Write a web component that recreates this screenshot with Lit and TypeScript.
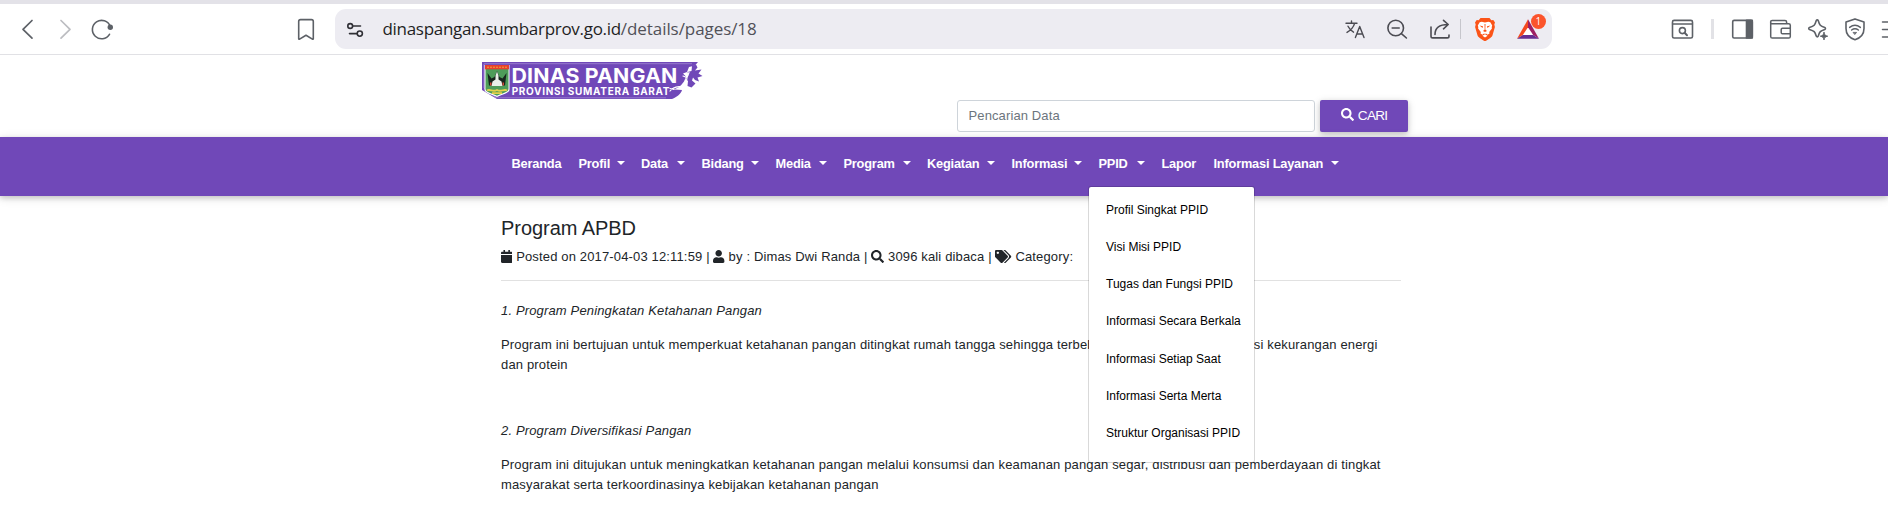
import { LitElement, html, css, svg } from "lit";
import { customElement } from "lit/decorators.js";

const FA: Record<string, [number, string]> = {
  search: [512, "M505 442.7L405.3 343c-4.5-4.5-10.6-7-17-7H372c27.6-35.3 44-79.7 44-128C416 93.1 322.9 0 208 0S0 93.1 0 208s93.1 208 208 208c48.3 0 92.7-16.4 128-44v16.3c0 6.4 2.5 12.5 7 17l99.7 99.7c9.4 9.4 24.6 9.4 33.9 0l28.3-28.3c9.4-9.4 9.4-24.6.1-34zM208 336c-70.7 0-128-57.2-128-128 0-70.7 57.2-128 128-128 70.7 0 128 57.2 128 128 0 70.7-57.2 128-128 128z"],
  user: [448, "M224 256c70.7 0 128-57.3 128-128S294.7 0 224 0 96 57.3 96 128s57.3 128 128 128zm89.6 32h-16.7c-22.2 10.2-46.9 16-72.9 16s-50.6-5.8-72.9-16h-16.7C60.2 288 0 348.2 0 422.4V464c0 26.5 21.5 48 48 48h352c26.5 0 48-21.5 48-48v-41.6c0-74.2-60.2-134.4-134.4-134.4z"],
  calendar: [448, "M12 192h424c6.6 0 12 5.4 12 12v260c0 26.5-21.5 48-48 48H48c-26.5 0-48-21.5-48-48V204c0-6.6 5.4-12 12-12zm436-44v-36c0-26.5-21.5-48-48-48h-48V12c0-6.6-5.4-12-12-12h-40c-6.6 0-12 5.4-12 12v52H160V12c0-6.6-5.4-12-12-12h-40c-6.6 0-12 5.4-12 12v52H48C21.5 64 0 85.5 0 112v36c0 6.6 5.4 12 12 12h424c6.6 0 12-5.4 12-12z"],
  tags: [640, "M497.941 225.941L286.059 14.059A48 48 0 0 0 252.118 0H48C21.49 0 0 21.49 0 48v204.118a48 48 0 0 0 14.059 33.941l211.882 211.882c18.744 18.745 49.136 18.746 67.882 0l204.118-204.118c18.745-18.745 18.745-49.137 0-67.882zM112 160c-26.51 0-48-21.49-48-48s21.49-48 48-48 48 21.49 48 48-21.49 48-48 48zm513.941 133.823L421.823 497.941c-18.745 18.745-49.137 18.745-67.882 0l-.36-.36L527.64 323.522c16.999-16.999 26.36-39.6 26.36-63.64s-9.362-46.641-26.36-63.64L331.397 0h48.721a48 48 0 0 1 33.941 14.059l211.882 211.882c18.745 18.745 18.745 49.137 0 67.882z"],
};
const fa = (name: string) => html`<svg class="fa" viewBox="0 0 ${FA[name][0]} 512"><path d=${FA[name][1]} /></svg>`;

/* Toolbar glyphs, each on a 24 x 24 grid. */
const GLYPHS: Record<string, unknown> = {
  back: svg`<path d="M16 3.5L7 12.3l9 8.9" stroke-width="1.7"/>`,
  forward: svg`<path d="M8 3.5l9 8.8-9 8.9" stroke="#bcbdc1" stroke-width="1.7"/>`,
  reload: svg`<path d="M20.2 9.3A9.2 9.2 0 1 0 19.5 17.3" stroke-width="1.6"/><circle cx="20.3" cy="10.2" r="2.7" fill="#5d6167" stroke="none"/>`,
  bookmark: svg`<path d="M4.7 4.4a1.8 1.8 0 0 1 1.8-1.8h11a1.8 1.8 0 0 1 1.8 1.8v17.3c0 .5-.5.7-.9.4L12 18.2l-6.4 3.9c-.4.3-.9.1-.9-.4z"/>`,
  tune: svg`<g stroke="#303036"><circle cx="7.2" cy="9" r="2.4"/><path d="M10 9h7.5M6.5 16.6H14"/><circle cx="16.8" cy="16.6" r="2.6"/></g>`,
  translate: svg`<g stroke="#4b4b52" stroke-width="1.4"><path d="M3 6.2h11M8.5 4v2M11.6 6.4C10.6 10 7.5 13.4 4 15.4M5 9.2c1.3 2.6 3 4.600 5.500 6M12.400 20.5l4.3-11 4.3 11M14 17h5.500"/></g>`,
  zoomOut: svg`<g stroke="#4b4b52"><circle cx="10.7" cy="11" r="7.8"/><path d="M7.200 11h7M16.400 16.700l5 4.300"/></g>`,
  share: svg`<g stroke="#4b4b52"><path d="M3 10v9.200a1.700 1.700 0 0 0 1.700 1.700h14.600a1.700 1.700 0 0 0 1.700-1.700V18M7 17.500C7 10.500 11 7.500 20 7.500M15.500 3.300l4.700 4.200-4.700 4.300"/></g>`,
  brave: svg`<g stroke="none"><path fill="#fb5418" d="M7.500 1h9l1.800 2.200 2-.3L22 5.600l-.7 2 .6 2.300-2.300 8.200c-.4 1.300-1.300 2.200-2.300 2.900l-4.200 2.700c-.7.4-1.500.4-2.200 0L6.700 21c-1-.7-1.900-1.600-2.300-2.900L2.100 9.900l.6-2.300L2 5.600l1.700-2.700 2 .3z"/><path fill="#fff" d="M12 5.400l3.200-.7 2.100.5 1.900 3.200-.5 1.700.2 1.500-2.700 3.400.3 1.500-2 1.200-1-1h-3l-1 1-2-1.200.3-1.500-2.700-3.400.2-1.500-.5-1.700 1.900-3.200 2.100-.5z"/><path fill="#fb5418" d="M6.500 8.600l3.500.6-.4 1.700zM17.500 8.600l-3.500.6.400 1.700zM11.500 7h1l-.2 5.500 1.700 1.500-2 1-2-1 1.700-1.500z"/><path fill="#fff" d="M12 17.200l2.600 1.500L12 20.600l-2.600-1.900z"/></g>`,
  bat: svg`<g stroke="none"><path fill="#fff" d="M12 8l6 11H6z"/><path fill="#f4491f" d="M12 2.300v8L6.800 18 1 21.800z"/><path fill="#9e1f63" d="M12 2.300v8l5.200 7.700 5.800 3.800z"/><path fill="#662d91" d="M1 21.800L6.800 18h10.400l5.800 3.800z"/></g>`,
  find: svg`<rect x="2.500" y="3.400" width="20" height="17.600" rx="1.600"/><path d="M2.500 7H22.500" stroke-width="1.300"/><circle cx="12.400" cy="13.600" r="3"/><path d="M14.600 15.800l2.400 2.400" stroke-width="2"/>`,
  sidebar: svg`<rect x="2.700" y="3.400" width="19.600" height="17.600" rx="1.400"/><path d="M16.500 3.400h5.800V21h-5.800z" fill="#5d6167"/>`,
  wallet: svg`<path d="M2.700 5V19.400A1.600 1.600 0 0 0 4.300 21h16.400a1.600 1.600 0 0 0 1.600-1.600V8.300a1.600 1.600 0 0 0-1.600-1.600H4.200a1.500 1.500 0 0 1 0-3.200h12.800a1.600 1.600 0 0 1 1.600 1.600v1.500M22.300 11.200h-7.800a1.300 1.300 0 0 0-1.300 1.300v3a1.300 1.300 0 0 0 1.300 1.300h7.800" stroke-width="1.500"/>`,
  sparkle: svg`<path d="M11.300 3.500c.5-.9 1.500-.9 1.900 0 1.400 4.800 2 5.600 6.600 7 .9.400.9 1.500 0 1.900-4.600 1.400-5.200 2.200-6.600 6.800-.4.900-1.400.9-1.900 0-1.400-4.600-2-5.400-6.900-6.800-.9-.4-.9-1.500 0-1.900 4.900-1.400 5.500-2.200 6.900-7z" stroke-width="1.600"/><path d="M19 15.500c.5 2.600 1 3.100 3.700 3.700-2.700.6-3.200 1.100-3.700 3.700-.5-2.600-1-3.100-3.700-3.700 2.700-.6 3.200-1.100 3.700-3.700z" fill="#5d6167" stroke-width="1"/>`,
  shield: svg`<path d="M12 1.900l9 3v6.600c0 5-3.300 9.400-9 11.300-5.700-1.900-9-6.300-9-11.300V4.900z" stroke-width="1.600"/><path d="M6.600 10.400c3.300-2.600 7.500-2.600 10.800 0M8.600 13c2-1.500 4.800-1.500 6.800 0" stroke-width="1.400"/><path d="M10.400 15.400h3.200L12 17.300z" fill="#5d6167" stroke-width=".8"/>`,
  menu: svg`<path d="M2.500 4.900h19M2.500 12.400h19M2.500 20h19" stroke-width="1.500"/>`,
};
const glyph = (name: string) => html`<svg class="glyph ${name}" viewBox="0 0 24 24">${GLYPHS[name]}</svg>`;

@customElement("browser-bar")
class BrowserBar extends LitElement {
  static styles = css`
    :host { display: block; border-top: 4px solid #e3e2e8; border-bottom: 1px solid #e1e1e5; background: #fff; }
    .bar { display: flex; align-items: center; height: 50px; overflow: hidden; padding-left: 16px; }
    .glyph { flex: none; width: 24px; height: 24px; fill: none; stroke: #5d6167; stroke-width: 1.6; stroke-linecap: round; stroke-linejoin: round; }
    .forward, .reload { margin-left: 13px; }
    .bookmark { margin-left: 180px; }
    .address { flex: none; box-sizing: border-box; display: flex; align-items: center; width: 1217px; height: 40px; margin-left: 17px; padding-left: 8px; border-radius: 11px; background: #edecf2; }
    .url { flex: none; box-sizing: border-box; width: 976px; padding-left: 15.500px; font: 17px/24px "Open Sans", sans-serif; letter-spacing: -0.3px; color: #1f1f24; white-space: nowrap; }
    .path { color: #515158; letter-spacing: -0.07px; }
    .zoomOut { margin-left: 18px; }
    .share { margin-left: 19px; }
    .sep { flex: none; width: 1px; height: 20px; margin: 0 12px 0 8px; background: #c6c6cc; }
    .rewards { position: relative; display: flex; margin-left: 19px; }
    .badge { position: absolute; left: 15px; top: -3px; width: 15px; height: 15px; border-radius: 50%; background: #fb542b; color: #fff; font: 10px/15px "Open Sans", sans-serif; text-align: center; }
    .find { margin-left: 118px; }
    .sep.wide { width: 3px; margin: 0 16px 0 17px; background: #e2e2e6; }
    .wallet, .shield { margin-left: 14px; }
    .sparkle, .menu { margin-left: 13px; }
  `;
  render() {
    return html`<div class="bar">
      ${glyph("back")}${glyph("forward")}${glyph("reload")}${glyph("bookmark")}
      <div class="address">
        ${glyph("tune")}
        <div class="url">dinaspangan.sumbarprov.go.id<span class="path">/details/pages/18</span></div>
        ${glyph("translate")}${glyph("zoomOut")}${glyph("share")}
        <span class="sep"></span>
        ${glyph("brave")}
        <span class="rewards">${glyph("bat")}<span class="badge">1</span></span>
      </div>
      ${glyph("find")}<span class="sep wide"></span>${glyph("sidebar")}${glyph("wallet")}${glyph("sparkle")}${glyph("shield")}${glyph("menu")}
    </div>`;
  }
}

@customElement("site-logo")
class SiteLogo extends LitElement {
  static styles = css`
    :host { display: block; width: 222px; height: 38px; }
    svg { display: block; }
    text { font-family: Inter, sans-serif; font-weight: 700; fill: #fff; }
  `;
  render() {
    return html`<svg width="222" height="38" viewBox="0 0 222 38">
      <path fill="#7048b8" d="M0 0H216l-3 3.500-6 1.500-2 5-4 1.500 3 3-2 5-4 5-6 3 8 .5c-1 4-5 7-10 9H15L0 28z"/>
      <path fill="none" stroke="#a68fd4" stroke-width=".7" d="M2 1.700h208M2 2v24L14 35.800h170"/>
      <path fill="#7048b8" d="M210 4l4-1.500 1.500 3-2.500 3 6.500-1-3 4 4 2.500-5 1.500 1.500 4-4-1.500-2-2.500-1 3 3.500 3-4 4-4-1.500.5-5-2.500-2 3-4-1-3 4-1z"/>
      <path fill="none" stroke="#fff" stroke-width="1.200" stroke-linecap="round" d="M188 29c3-4 6-4 10-4.500s7-4 7-9M201 14l4 1.500 2-5M192 27.500l-4-1"/>
      <path fill="#fff" d="M2.500 3h25v24.500c0 3.500-6 4.500-12.500 7.500-6.500-3-12.500-4-12.500-7.500z"/>
      <path fill="#4e9c5a" d="M3.500 4h23v23c0 3-5.500 4-11.500 6.800C9 31 3.500 30 3.500 27z"/>
      <path fill="#e8402c" d="M3 3h24v4.300H3z"/>
      <path stroke="#f2b33c" stroke-width=".9" stroke-dasharray="2 1" d="M5 5.200h20"/>
      <path fill="#17251d" d="M5.500 11l4 5.500 3-1.500L15 9l2.500 6 3 1.500 4-5.500-1.500 12.500h-16z"/>
      <path fill="#e9efe9" d="M15 9.500l1.500 4v4l3 2 1 4.500h-11l1-4.500 3-2v-4z"/>
      <path fill="#d44735" d="M8 20.500h1.500v3H8zM20.500 20.500H22v3h-1.500z"/>
      <path fill="none" stroke="#e5d04b" stroke-width="1.800" d="M5 28.500c3-2 6 2 10-.5 4 2.500 7-1.500 10 .5M10 31.200h10"/>
      <text x="29.500" y="20.500" font-size="20" textLength="166" lengthAdjust="spacingAndGlyphs">DINAS PANGAN</text>
      <text x="29.700" y="33" font-size="10" textLength="158" lengthAdjust="spacing">PROVINSI SUMATERA BARAT</text>
    </svg>`;
  }
}

const NAV = ["Beranda", "Profil", "Data", "Bidang", "Media", "Program", "Kegiatan", "Informasi", "PPID", "Lapor", "Informasi Layanan"];
const PLAIN = new Set(["Beranda", "Lapor"]);
const PPID_MENU = ["Profil Singkat PPID", "Visi Misi PPID", "Tugas dan Fungsi PPID", "Informasi Secara Berkala", "Informasi Setiap Saat", "Informasi Serta Merta", "Struktur Organisasi PPID"];

@customElement("app-root")
class AppRoot extends LitElement {
  static styles = css`
    :host { display: block; height: 507px; overflow: hidden; background: #fff; color: #212529; font: 13px/20px "Liberation Sans", Arial, sans-serif; letter-spacing: 0.15px; }
    .fa { height: 1em; fill: currentColor; vertical-align: -0.125em; }
    .header { display: flex; justify-content: space-between; height: 82px; padding: 0 480px 0 482px; box-sizing: border-box; }
    .logo { margin-top: 7px; }
    .search { display: flex; gap: 5px; margin-top: 45px; height: 32px; }
    .field { box-sizing: border-box; width: 358px; padding: 0 10.500px; border: 1px solid #ced4da; border-radius: 3px; font: inherit; letter-spacing: 0.12px; color: #495057; outline: none; }
    .field::placeholder { color: #6c757d; opacity: 1; }
    .go { width: 88px; padding: 0 0 1px; border: 0; border-radius: 2px; background: #7048b8; color: #fff; font: inherit; font-size: 13.600px; letter-spacing: -0.8px; box-shadow: 0 2px 5px rgba(0,0,0,.16), 0 2px 10px rgba(0,0,0,.12); }
    .go .fa { height: 13px; margin-right: 4px; }
    .nav { position: relative; display: grid; grid-template-columns: 67px 62.500px 60.500px 74px 68px 83.500px 84.500px 87px 63px 52px 141.500px; height: 59px; padding: 17px 0 0 511.500px; box-sizing: border-box; background: #7048b8; color: #fff; font-size: 12.800px; font-weight: 700; letter-spacing: -0.2px; box-shadow: 0 2px 5px rgba(0,0,0,.16), 0 2px 10px rgba(0,0,0,.12); }
    .item { position: relative; display: flex; justify-content: space-between; padding-right: 16.500px; height: 20px; white-space: nowrap; }
    .caret { margin-top: 6.500px; width: 0; height: 0; border: 4px solid transparent; border-top-color: #fff; border-bottom: 0; }
    .menu { position: absolute; z-index: 2; left: -10.500px; top: 32px; box-sizing: border-box; width: 167px; height: 277px; padding: 4.800px 0 0 17px; border: 1px solid rgba(0,0,0,.15); border-radius: 3px; background: #fff; background-clip: padding-box; color: #000; font-size: 12px; font-weight: 400; letter-spacing: 0; line-height: 37.200px; }
    .article { width: 900px; padding: 20px 0 0 501px; }
    h1 { margin: 0; font-size: 20px; line-height: 24px; font-weight: 400; letter-spacing: -0.05px; }
    .meta { margin-top: 7px; white-space: nowrap; }
    hr { margin: 13px 0 19.500px; border: 0; border-top: 1px solid #e1e1e1; }
    p { margin: 0 0 13px; white-space: nowrap; }
    .heading { margin-bottom: 14.200px; }
    .gap { display: inline-block; overflow: hidden; width: 166.500px; height: 20px; vertical-align: top; }
  `;
  render() {
    return html`
      <browser-bar></browser-bar>
      <div class="header">
        <site-logo class="logo"></site-logo>
        <div class="search">
          <input class="field" placeholder="Pencarian Data" />
          <button class="go">${fa("search")}CARI</button>
        </div>
      </div>
      <div class="nav">
        ${NAV.map((name) => html`<div class="item">${name}${PLAIN.has(name) ? "" : html`<span class="caret"></span>`}${name === "PPID" ? html`<div class="menu">${PPID_MENU.map((m) => html`<div>${m}</div>`)}</div>` : ""}</div>`)}
      </div>
      <div class="article">
        <h1>Program APBD</h1>
        <div class="meta">${fa("calendar")} Posted on 2017-04-03 12:11:59 | ${fa("user")} by : Dimas Dwi Randa | ${fa("search")} 3096 kali dibaca | ${fa("tags")} Category:</div>
        <hr />
        <p class="heading"><i>1. Program Peningkatan Ketahanan Pangan</i></p>
        <p>Program ini bertujuan untuk memperkuat ketahanan pangan ditingkat rumah tangga sehingga terbe<span class="gap">bas dari</span>si kekurangan energi<br />dan protein</p>
        <p>&nbsp;</p>
        <p class="heading"><i>2. Program Diversifikasi Pangan</i></p>
        <p>Program ini ditujukan untuk meningkatkan ketahanan pangan melalui konsumsi dan keamanan pangan segar, distribusi dan pemberdayaan di tingkat<br />masyarakat serta terkoordinasinya kebijakan ketahanan pangan</p>
      </div>
    `;
  }
}
